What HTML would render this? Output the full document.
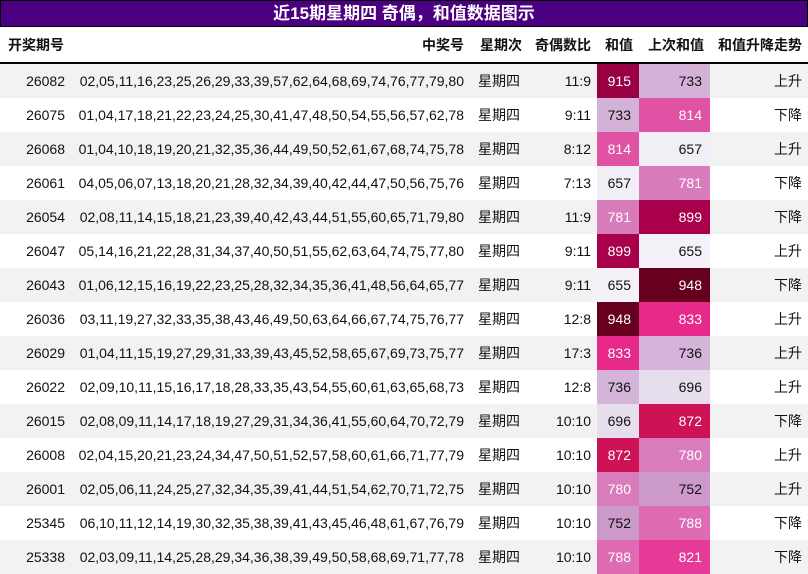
<!DOCTYPE html><html><head><meta charset="utf-8"><style>
body{margin:0;width:808px;height:574px;overflow:hidden;background:#fff;font-family:"Liberation Sans","Noto Sans CJK SC",sans-serif;font-size:14px;color:#111}
.t{background:#4b0082;border:1px solid #000;color:#fff;font-weight:bold;font-size:17px;text-align:center;line-height:25px;box-sizing:border-box;height:27px}
table{border-collapse:collapse;width:808px;table-layout:fixed}
td,th{padding:0 6px 0 0;text-align:right;white-space:nowrap;height:34px}
th{font-weight:bold;height:35px;border-bottom:2px solid #000}
#b tr:nth-child(odd) td{background:#f2f2f2}
td.c{padding-right:8px}
</style></head><body>
<div class="t">近15期星期四 奇偶，和值数据图示</div>
<table>
<colgroup><col style="width:71px"><col style="width:399px"><col style="width:58px"><col style="width:69px"><col style="width:42px"><col style="width:71px"><col style="width:98px"></colgroup>
<thead><tr><th style="text-align:left;padding-left:8px">开奖期号</th><th>中奖号</th><th>星期次</th><th>奇偶数比</th><th>和值</th><th>上次和值</th><th>和值升降走势</th></tr></thead>
<tbody id="b"></tbody>
</table>
<script>
var d=[["26082","02,05,11,16,23,25,26,29,33,39,57,62,64,68,69,74,76,77,79,80","11:9",915,733,"上升"],
["26075","01,04,17,18,21,22,23,24,25,30,41,47,48,50,54,55,56,57,62,78","9:11",733,814,"下降"],
["26068","01,04,10,18,19,20,21,32,35,36,44,49,50,52,61,67,68,74,75,78","8:12",814,657,"上升"],
["26061","04,05,06,07,13,18,20,21,28,32,34,39,40,42,44,47,50,56,75,76","7:13",657,781,"下降"],
["26054","02,08,11,14,15,18,21,23,39,40,42,43,44,51,55,60,65,71,79,80","11:9",781,899,"下降"],
["26047","05,14,16,21,22,28,31,34,37,40,50,51,55,62,63,64,74,75,77,80","9:11",899,655,"上升"],
["26043","01,06,12,15,16,19,22,23,25,28,32,34,35,36,41,48,56,64,65,77","9:11",655,948,"下降"],
["26036","03,11,19,27,32,33,35,38,43,46,49,50,63,64,66,67,74,75,76,77","12:8",948,833,"上升"],
["26029","01,04,11,15,19,27,29,31,33,39,43,45,52,58,65,67,69,73,75,77","17:3",833,736,"上升"],
["26022","02,09,10,11,15,16,17,18,28,33,35,43,54,55,60,61,63,65,68,73","12:8",736,696,"上升"],
["26015","02,08,09,11,14,17,18,19,27,29,31,34,36,41,55,60,64,70,72,79","10:10",696,872,"下降"],
["26008","02,04,15,20,21,23,24,34,47,50,51,52,57,58,60,61,66,71,77,79","10:10",872,780,"上升"],
["26001","02,05,06,11,24,25,27,32,34,35,39,41,44,51,54,62,70,71,72,75","10:10",780,752,"上升"],
["25345","06,10,11,12,14,19,30,32,35,38,39,41,43,45,46,48,61,67,76,79","10:10",752,788,"下降"],
["25338","02,03,09,11,14,25,28,29,34,36,38,39,49,50,58,68,69,71,77,78","10:10",788,821,"下降"]];
var col={948:"#67001f",915:"#980043",899:"#a8004b",872:"#ce1256",833:"#e7298a",821:"#e53a98",814:"#e052a3",788:"#df6bb3",781:"#d87bbb",780:"#d97cbb",752:"#cb9ac9",736:"#d4b4d8",733:"#d4b2d7",696:"#e6dded",657:"#f1eef6",655:"#f4f2f8"};
function c(v){return '<td class="c" style="background:'+col[v]+';color:'+(v>=780?'#fff':'#111')+'">'+v+'</td>';}
var h="";d.forEach(function(r){h+='<tr><td>'+r[0]+'</td><td>'+r[1]+'</td><td style="text-align:left;padding-left:8px">星期四</td><td>'+r[2]+'</td>'+c(r[3])+c(r[4])+'<td>'+r[5]+'</td></tr>';});
document.getElementById("b").innerHTML=h;
</script>
</body></html>
